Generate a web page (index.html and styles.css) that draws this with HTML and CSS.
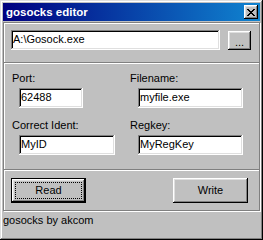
FILE: index.html
```html
<!DOCTYPE html>
<html lang="en">
<head>
    <meta charset="UTF-8">
    <meta name="viewport" content="width=device-width, initial-scale=1.0">
    <title>gosocks editor</title>
    <link rel="stylesheet" href="styles.css">
</head>
<body>
    <div class="window">
        <div class="title-bar">
            <span class="title">gosocks editor</span>
            <button class="close-btn" aria-label="Close">
                <svg width="8" height="7" viewBox="0 0 8 7" shape-rendering="crispEdges">
                    <path d="M0 0h2v1H0zM6 0h2v1H6zM1 1h2v1H1zM5 1h2v1H5zM2 2h4v1H2zM3 3h2v1H3zM2 4h4v1H2zM1 5h2v1H1zM5 5h2v1H5zM0 6h2v1H0zM6 6h2v1H6z" fill="#000"/>
                </svg>
            </button>
        </div>

        <div class="panel">
            <div class="section file-row">
                <input type="text" class="field path-field" value="A:\Gosock.exe">
                <button class="btn browse-btn">...</button>
            </div>

            <div class="section fields">
                <div class="cell">
                    <label>Port:</label>
                    <input type="text" class="field port-field" value="62488">
                </div>
                <div class="cell right">
                    <label>Filename:</label>
                    <input type="text" class="field wide-field" value="myfile.exe">
                </div>
                <div class="cell second">
                    <label>Correct Ident:</label>
                    <input type="text" class="field ident-field" value="MyID">
                </div>
                <div class="cell right second">
                    <label>Regkey:</label>
                    <input type="text" class="field wide-field" value="MyRegKey">
                </div>
            </div>

            <div class="section actions">
                <button class="btn action-btn default-btn"><span class="focus">Read</span></button>
                <button class="btn action-btn">Write</button>
            </div>
        </div>

        <div class="status">gosocks by akcom</div>
    </div>
</body>
</html>
```

FILE: styles.css
```css
body {
    margin: 0;
    background-color: #c0c0c0;
    font-family: "Liberation Sans", Arial, sans-serif;
    font-size: 11px;
    line-height: 13px;
    color: #000;
}
.window {
    box-sizing: border-box;
    width: 263px;
    height: 240px;
    padding: 3px;
    background-color: #c0c0c0;
    box-shadow: inset -1px -1px #000, inset 1px 1px #dfdfdf, inset -2px -2px #808080, inset 2px 2px #fff;
}
.title-bar {
    height: 18px;
    display: flex;
    align-items: center;
    justify-content: space-between;
    padding-left: 3px;
    padding-right: 2px;
    background: linear-gradient(90deg, #000080, #1084d0);
}
.title {
    color: #fff;
    font-weight: bold;
    font-size: 11.5px;
}
.close-btn {
    box-sizing: border-box;
    width: 14px;
    height: 14px;
    padding: 0;
    border: none;
    background-color: #c0c0c0;
    display: flex;
    align-items: center;
    justify-content: center;
    box-shadow: inset -1px -1px #000, inset 1px 1px #fff, inset -2px -2px #808080, inset 2px 2px #dfdfdf;
}
.panel {
    margin-top: 1px;
    border: 1px solid #808080;
    box-shadow: 1px 1px 0 #fff;
}
.section {
    box-sizing: border-box;
    box-shadow: inset 1px 1px 0 #fff;
}
.section + .section {
    border-top: 1px solid #808080;
}
.file-row {
    height: 39px;
    display: flex;
    align-items: flex-start;
    padding: 7px 0 0 7px;
}
.field {
    box-sizing: border-box;
    height: 20px;
    padding: 0 1px 2px 2px;
    border: none;
    outline: none;
    background-color: #fff;
    font: inherit;
    color: #000;
    box-shadow: inset -1px -1px #fff, inset 1px 1px #808080, inset -2px -2px #dfdfdf, inset 2px 2px #000;
}
.path-field {
    width: 209px;
}
.btn {
    box-sizing: border-box;
    padding: 0;
    border: none;
    background-color: #c0c0c0;
    font: inherit;
    color: #000;
    box-shadow: inset -1px -1px #000, inset 1px 1px #fff, inset -2px -2px #808080, inset 2px 2px #dfdfdf;
}
.browse-btn {
    width: 23px;
    height: 19px;
    margin: 1px 0 0 8px;
    padding-top: 3px;
}
.fields {
    height: 107px;
    display: grid;
    grid-template-columns: 118px 1fr;
    grid-template-rows: 36px 36px;
    row-gap: 11px;
    padding: 9px 0 0 8px;
}
.cell label {
    display: block;
    height: 13px;
    margin-bottom: 3px;
}
.cell .field {
    display: block;
    margin-left: 7px;
}
.cell.right .field {
    margin-left: 8px;
}
.port-field {
    width: 64px;
}
.ident-field {
    width: 96px;
}
.wide-field {
    width: 105px;
}
.actions {
    height: 41px;
    display: flex;
    justify-content: space-between;
    padding: 8px 11px 0 7px;
}
.action-btn {
    width: 75px;
    height: 25px;
}
.default-btn {
    padding: 4px;
    box-shadow: inset -2px -2px #000, inset 1px 1px #000, inset 2px 2px #fff, inset -3px -3px #808080, inset 3px 3px #dfdfdf;
}
.focus {
    display: block;
    height: 17px;
    line-height: 15px;
    border: 1px dotted #000;
    box-sizing: border-box;
}
.status {
    padding: 3px 0 0 0;
}
```
